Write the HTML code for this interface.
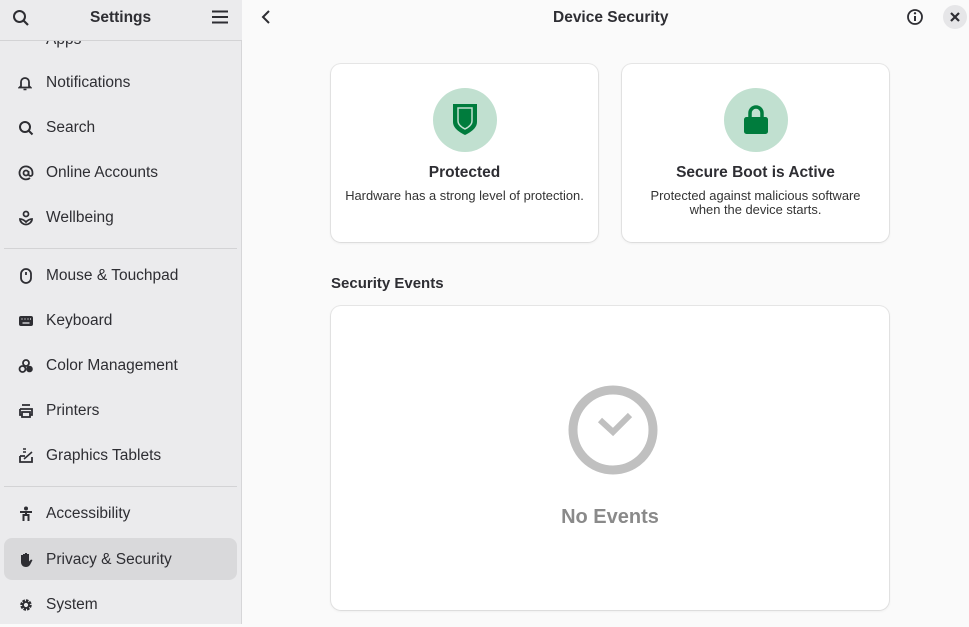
<!DOCTYPE html>
<html><head><style>
*{margin:0;padding:0;box-sizing:border-box}
body{width:969px;height:624px;overflow:hidden;font-family:"Liberation Sans",sans-serif;background:#fafafa;color:#2e2e33;position:relative}
#side{position:absolute;left:0;top:0;width:242px;height:624px;background:#ebebed;border-right:1px solid #d6d6d8}
#sh{position:absolute;left:0;top:0;width:242px;height:41px;border-bottom:1px solid #d3d3d5;background:#ebebed;z-index:2}
.t{position:absolute;font-size:15.5px;font-weight:bold;top:9px}
.it{position:absolute;left:4px;width:233px;height:42px;font-size:15.5px;line-height:44px;padding-left:42px}
.it svg{position:absolute;left:14px;top:14px}
.sep{position:absolute;left:4px;width:233px;height:1px;background:#d3d3d5}
.card{position:absolute;background:#fff;border-radius:10px;box-shadow:0 0 0 1px rgba(0,0,0,.07),0 1px 3px rgba(0,0,0,.08);text-align:center}
.circ{position:absolute;width:64px;height:64px;border-radius:50%;background:#c1e0d0;left:50%;margin-left:-32px;top:24px}
.ct{position:absolute;left:0;right:0;top:100px;font-weight:bold;font-size:15.5px}
.cd{position:absolute;left:0;right:0;top:125px;font-size:12.9px;line-height:14px;color:#333}
</style></head><body>
<div id="side">
<div id="sh">
<svg style="position:absolute;left:12px;top:9px" width="18" height="18" viewBox="0 0 18 18"><circle cx="7.5" cy="7.5" r="5.5" fill="none" stroke="#2e2e33" stroke-width="2"/><path d="M11.5 11.5l4.5 4.5" stroke="#2e2e33" stroke-width="2.2"/></svg>
<div class="t" style="left:90px">Settings</div>
<svg style="position:absolute;left:212px;top:10px" width="16" height="14"><path d="M0 1.5h16M0 7h16M0 12.5h16" stroke="#2e2e33" stroke-width="2"/></svg>
</div>
<div class="it" style="top:18px">Apps</div>
<div class="it" style="top:61px"><svg width="14" height="16" viewBox="0 0 14 16"><path d="M3 11V7a4 4 0 018 0v4l1.5 1.5h-11z" fill="none" stroke="#2e2e33" stroke-width="1.8"/><path d="M5.5 14.5h3" stroke="#2e2e33" stroke-width="1.5"/></svg>Notifications</div>
<div class="it" style="top:106px"><svg width="16" height="16"><circle cx="7" cy="7" r="5" fill="none" stroke="#2e2e33" stroke-width="2"/><path d="M10.5 10.5l4 4" stroke="#2e2e33" stroke-width="2"/></svg>Search</div>
<div class="it" style="top:151px"><svg width="16" height="16"><circle cx="8" cy="8" r="2.5" fill="none" stroke="#2e2e33" stroke-width="1.8"/><path d="M10.5 6v3a2 2 0 004 0V8a6.5 6.5 0 10-2.5 5" fill="none" stroke="#2e2e33" stroke-width="1.8"/></svg>Online Accounts</div>
<div class="it" style="top:196px"><svg width="16" height="16"><circle cx="8" cy="4" r="2.5" fill="none" stroke="#2e2e33" stroke-width="1.8"/><path d="M2 9c2 0 4 1 6 3 2-2 4-3 6-3 0 3-3 5.5-6 5.5S2 12 2 9z" fill="none" stroke="#2e2e33" stroke-width="1.8"/></svg>Wellbeing</div>
<div class="sep" style="top:248px"></div>
<div class="it" style="top:254px"><svg width="16" height="16"><rect x="3" y="1" width="10" height="14" rx="5" fill="none" stroke="#2e2e33" stroke-width="1.8"/><path d="M8 4v3" stroke="#2e2e33" stroke-width="1.8"/></svg>Mouse &amp; Touchpad</div>
<div class="it" style="top:299px"><svg width="16" height="16"><rect x="1" y="3" width="14" height="10" rx="2" fill="#2e2e33"/><path d="M3.5 6h1M6.5 6h1M9.5 6h1M12 6h1M4.5 10h7" stroke="#ebebed" stroke-width="1.3"/></svg>Keyboard</div>
<div class="it" style="top:344px"><svg width="16" height="16"><circle cx="8" cy="5" r="3" fill="none" stroke="#2e2e33" stroke-width="1.8"/><circle cx="4.5" cy="11" r="3" fill="none" stroke="#2e2e33" stroke-width="1.8"/><circle cx="11.5" cy="11" r="3.3" fill="#2e2e33"/></svg>Color Management</div>
<div class="it" style="top:389px"><svg width="16" height="16"><path d="M4 2h8M2 6h12v6h-2M4 12H2V6" fill="none" stroke="#2e2e33" stroke-width="1.8"/><rect x="4" y="9" width="8" height="5" fill="none" stroke="#2e2e33" stroke-width="1.8"/></svg>Printers</div>
<div class="it" style="top:434px"><svg width="16" height="16"><path d="M2 8v6h12V9M2 8h5" fill="none" stroke="#2e2e33" stroke-width="1.8"/><path d="M6 11l8-7M5 1h3M5 4h3" stroke="#2e2e33" stroke-width="1.6"/></svg>Graphics Tablets</div>
<div class="sep" style="top:486px"></div>
<div class="it" style="top:492px"><svg width="16" height="16"><circle cx="8" cy="2.5" r="2" fill="#2e2e33"/><path d="M2 6h12M8 6v4M5.5 15V9h5v6" fill="none" stroke="#2e2e33" stroke-width="2"/></svg>Accessibility</div>
<div class="it" style="top:538px;background:#d9d9db;border-radius:8px"><svg width="16" height="16"><path d="M3 3v7c0 3 2 5 5 5s4-2 5-4l1.5-3-1.5-.5-2 2V2H9v6V1H7v7V2H5v7V3z" fill="#2e2e33"/></svg>Privacy &amp; Security</div>
<div class="it" style="top:583px"><svg width="16" height="16"><circle cx="8" cy="8" r="4.5" fill="none" stroke="#2e2e33" stroke-width="2.5" stroke-dasharray="2.5 1"/><circle cx="8" cy="8" r="3" fill="none" stroke="#2e2e33" stroke-width="1.8"/></svg>System</div>
</div>
<svg style="position:absolute;left:260px;top:9px" width="12" height="16"><path d="M9 2L3 8l6 6" fill="none" stroke="#2e2e33" stroke-width="2"/></svg>
<div class="t" style="left:553px">Device Security</div>
<svg style="position:absolute;left:906px;top:8px" width="18" height="18"><circle cx="9" cy="9" r="7" fill="none" stroke="#2e2e33" stroke-width="1.8"/><path d="M9 8v5" stroke="#2e2e33" stroke-width="2"/><circle cx="9" cy="5.3" r="1.2" fill="#2e2e33"/></svg>
<div style="position:absolute;left:943px;top:5px;width:24px;height:24px;border-radius:50%;background:#e6e6e8"></div>
<svg style="position:absolute;left:950px;top:12px" width="10" height="10"><path d="M1 1l8 8M9 1l-8 8" stroke="#2e2e33" stroke-width="2.2"/></svg>
<div class="card" style="left:331px;top:64px;width:267px;height:178px">
<div class="circ"><svg style="position:absolute;left:18px;top:15px" width="28" height="34" viewBox="0 0 28 34"><path d="M2 1h24v18c0 6-6 10-12 13C8 29 2 25 2 19z" fill="#007c3d"/><path d="M7 5h14v13c0 4-4 6.5-7 8-3-1.5-7-4-7-8z" fill="none" stroke="#c1e0d0" stroke-width="1.5"/></svg></div>
<div class="ct">Protected</div><div class="cd">Hardware has a strong level of protection.</div></div>
<div class="card" style="left:622px;top:64px;width:267px;height:178px">
<div class="circ"><svg style="position:absolute;left:19px;top:16px" width="26" height="30" viewBox="0 0 26 30"><path d="M7 14V9a6 6 0 0112 0v5" fill="none" stroke="#007c3d" stroke-width="3.5"/><rect x="1" y="13" width="24" height="17" rx="2.5" fill="#007c3d"/></svg></div>
<div class="ct">Secure Boot is Active</div><div class="cd">Protected against malicious software<br>when the device starts.</div></div>
<div style="position:absolute;left:331px;top:275px;font-size:15px;font-weight:bold">Security Events</div>
<div class="card" style="left:331px;top:306px;width:558px;height:304px">
<svg style="position:absolute;left:237px;top:79px" width="90" height="90"><circle cx="45" cy="45" r="40" fill="none" stroke="#c0c0c0" stroke-width="9"/><path d="M32 35l13 12 17-17" fill="none" stroke="#c0c0c0" stroke-width="6"/></svg>
<div style="position:absolute;left:0;right:0;top:200px;font-size:20px;font-weight:bold;color:#8a8a8a">No Events</div>
</div>
</body></html>
